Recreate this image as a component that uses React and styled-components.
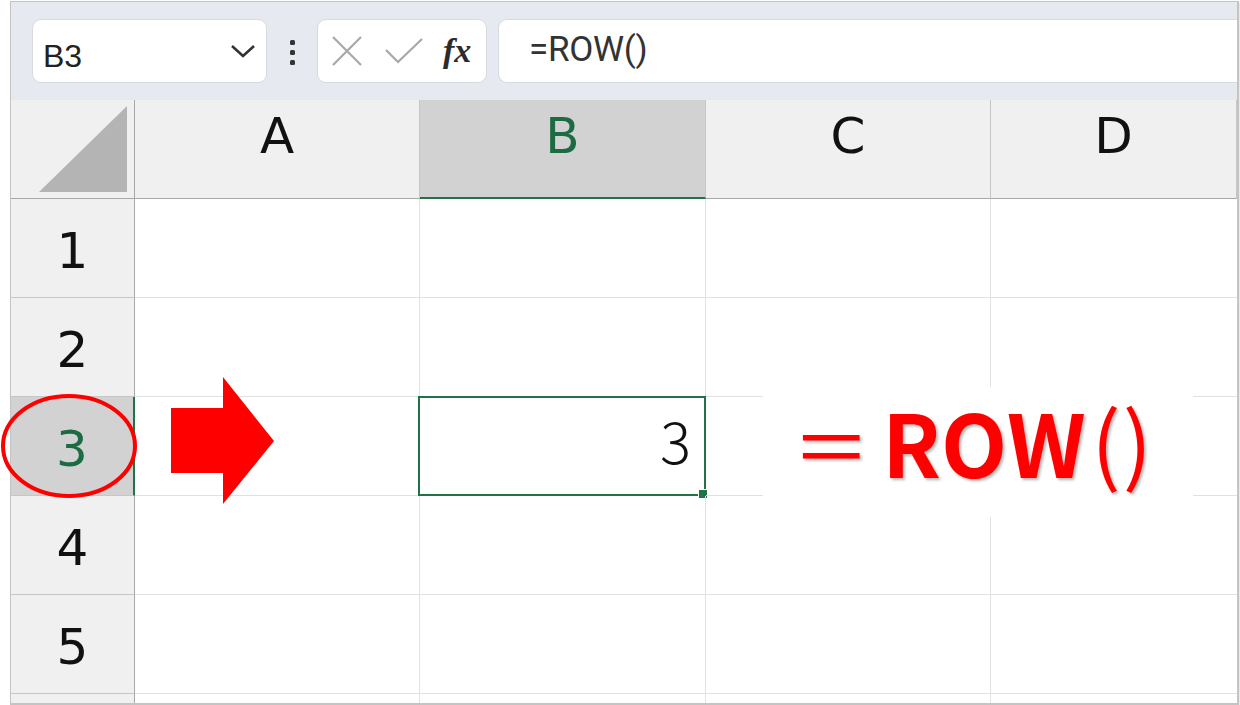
import styled, { createGlobalStyle } from 'styled-components';

const GlobalStyle = createGlobalStyle`
  body {
    margin: 0;
    background: #ffffff;
    font-family: "Noto Sans", sans-serif;
  }
`;

const COLS = ['A', 'B', 'C', 'D'];
const ROWS = [1, 2, 3, 4, 5, 6];
const SEL_COL = 'B';
const SEL_ROW = 3;

const App = () => {
  return (
    <>
      <GlobalStyle />
      <Frame>
        <Toolbar>
          <NameBox>
            <NameText>B3</NameText>
            <svg width="26" height="14" viewBox="0 0 26 14">
              <path d="M2 2 L13 12 L24 2" fill="none" stroke="#333" strokeWidth="2.6" />
            </svg>
          </NameBox>
          <Dots>
            <Dot />
            <Dot />
            <Dot />
          </Dots>
          <FuncBox>
            <svg width="32" height="30" viewBox="0 0 32 30">
              <path d="M2 1 L30 29 M30 1 L2 29" stroke="#a8a8a8" strokeWidth="2.2" />
            </svg>
            <svg width="38" height="26" viewBox="0 0 38 26">
              <path d="M1 12 L13 24 L37 1" fill="none" stroke="#a8a8a8" strokeWidth="2.2" />
            </svg>
            <Fx>fx</Fx>
          </FuncBox>
          <FormulaBox>=ROW()</FormulaBox>
        </Toolbar>

        <Sheet>
          <Corner>
            <svg width="90" height="88" viewBox="0 0 90 88">
              <polygon points="88,0 88,86 0,86" fill="#b4b4b4" />
            </svg>
          </Corner>
          {COLS.map((c) => (
            <ColHead key={c} $selected={c === SEL_COL}>{c}</ColHead>
          ))}

          {ROWS.map((r) => (
            <Row key={r} r={r} />
          ))}
        </Sheet>
      </Frame>
    </>
  );
};

const Row = ({ r }) => {
  const selected = r === SEL_ROW;
  const last = r === ROWS.length;
  return (
    <>
      <RowHead $selected={selected} $last={last}>
        {!last && r}
        {selected && (
          <Circle width="140" height="108" viewBox="0 0 140 108">
            <ellipse cx="70" cy="53" rx="66" ry="50" fill="none" stroke="#ff0000" strokeWidth="4" />
          </Circle>
        )}
      </RowHead>
      {COLS.map((c) => (
        <Cell key={c} $last={last} $lastCol={c === 'D'}>
          {selected && c === 'A' && (
            <Arrow width="104" height="128" viewBox="0 0 104 128">
              <polygon points="0,31 52,31 52,0 103,64 52,127 52,96 0,96" fill="#ff0000" />
            </Arrow>
          )}
          {selected && c === SEL_COL && (
            <>
              <Value>3</Value>
              <Selection />
              <Handle />
            </>
          )}
          {selected && c === 'C' && (
            <Label>
              <LabelPart $kind="eq">＝</LabelPart>
              <LabelPart $kind="bold">ROW</LabelPart>
              <LabelPart $kind="paren">()</LabelPart>
            </Label>
          )}
        </Cell>
      ))}
    </>
  );
};

const Frame = styled.div`
  margin: 1px 0 0 10px;
  width: 1226px;
  border: 1px solid #c4c4c4;
  border-bottom-width: 2px;
  border-right-width: 2px;
  box-shadow: 1px 1px 2px rgba(0, 0, 0, 0.12);
  background: #ffffff;
`;

const Toolbar = styled.div`
  display: flex;
  align-items: center;
  height: 98px;
  padding-left: 21px;
  background: #e6e9ef;
`;

const NameBox = styled.div`
  display: flex;
  align-items: center;
  justify-content: space-between;
  box-sizing: border-box;
  width: 235px;
  height: 64px;
  padding: 0 10px 0 10px;
  background: #ffffff;
  border: 1px solid #d7dae0;
  border-radius: 9px;
`;

const NameText = styled.span`
  padding-top: 11px;
  font-family: "Liberation Sans", Arial, sans-serif;
  font-size: 32px;
  color: #222;
`;

const Dots = styled.div`
  display: flex;
  flex-direction: column;
  align-items: center;
  gap: 5px;
  width: 50px;
  margin-top: 2px;
`;

const Dot = styled.span`
  width: 5px;
  height: 5px;
  border-radius: 1.5px;
  background: #333;
`;

const FuncBox = styled.div`
  display: flex;
  align-items: center;
  gap: 22px;
  box-sizing: border-box;
  width: 170px;
  height: 64px;
  padding: 0 0 0 13px;
  background: #ffffff;
  border: 1px solid #d7dae0;
  border-radius: 9px;
  margin-right: 11px;
`;

const Fx = styled.span`
  font-family: "Liberation Serif", "Times New Roman", serif;
  font-style: italic;
  font-weight: 700;
  font-size: 34px;
  color: #2b2b2b;
  margin-left: -2px;
`;

const FormulaBox = styled.div`
  flex: 1;
  display: flex;
  align-items: center;
  box-sizing: border-box;
  height: 64px;
  padding: 0 0 4px 30px;
  background: #ffffff;
  border: 1px solid #d7dae0;
  border-right: none;
  border-radius: 9px 0 0 9px;
  font-family: "Roboto", "Liberation Sans", sans-serif;
  font-size: 35px;
  color: #333;
  letter-spacing: -0.3px;
`;

const Sheet = styled.div`
  display: grid;
  grid-template-columns: 124px 285px 286px 285px 1fr;
  grid-template-rows: repeat(6, 99px) 9px;
`;

const Corner = styled.div`
  display: flex;
  align-items: flex-end;
  justify-content: flex-end;
  padding: 0 5px 4px 0;
  background: #f0f0f0;
  border-right: 1px solid #a8a8a8;
  border-bottom: 1px solid #a8a8a8;
`;

const headText = `
  display: flex;
  align-items: center;
  justify-content: center;
  font-family: "DejaVu Sans", "Liberation Sans", sans-serif;
  font-size: 50px;
`;

const ColHead = styled.div`
  ${headText}
  padding-bottom: 26px;
  background: ${(p) => (p.$selected ? '#d2d2d2' : '#f0f0f0')};
  color: ${(p) => (p.$selected ? '#1d6b43' : '#111')};
  border-right: 1px solid #c6c6c6;
  border-bottom: ${(p) => (p.$selected ? '2px solid #217346' : '1px solid #a8a8a8')};
  &:last-of-type {
    border-right: none;
  }
`;

const RowHead = styled.div`
  ${headText}
  position: relative;
  padding-top: 6px;
  background: ${(p) => (p.$selected ? '#d2d2d2' : '#f0f0f0')};
  color: ${(p) => (p.$selected ? '#1d6b43' : '#111')};
  border-right: ${(p) => (p.$selected ? '2px solid #217346' : '1px solid #a8a8a8')};
  border-bottom: ${(p) => (p.$last ? 'none' : '1px solid #c6c6c6')};
`;

const Circle = styled.svg`
  position: absolute;
  left: -12px;
  top: -4px;
  z-index: 3;
`;

const Cell = styled.div`
  position: relative;
  display: flex;
  align-items: center;
  justify-content: flex-end;
  border-right: ${(p) => (p.$lastCol ? 'none' : '1px solid #e1e1e1')};
  border-bottom: ${(p) => (p.$last ? 'none' : '1px solid #e1e1e1')};
`;

const Arrow = styled.svg`
  position: absolute;
  left: 36px;
  top: -20px;
  z-index: 2;
`;

const Value = styled.span`
  padding: 0 14px 14px 0;
  font-family: "Noto Sans CJK JP", "Noto Sans", sans-serif;
  font-weight: 300;
  font-size: 58px;
  color: #111;
`;

const Selection = styled.div`
  position: absolute;
  left: -2px;
  top: -1px;
  width: 288px;
  height: 100px;
  box-sizing: border-box;
  border: 2px solid #217346;
  pointer-events: none;
`;

const Handle = styled.div`
  position: absolute;
  left: 279px;
  top: 93px;
  width: 8px;
  height: 8px;
  background: #217346;
  outline: 1px solid #ffffff;
`;

const Label = styled.div`
  position: absolute;
  left: 57px;
  top: -10px;
  width: 430px;
  height: 130px;
  box-sizing: border-box;
  padding: 0 10px 22px 0;
  z-index: 2;
  display: flex;
  align-items: center;
  justify-content: center;
  background: #ffffff;
  color: #ff0000;
  font-family: "Noto Sans CJK JP", "Noto Sans", sans-serif;
  text-shadow: 2px 2px 3px rgba(0, 0, 0, 0.3);
  white-space: nowrap;
`;

const LabelPart = styled.span`
  font-size: ${(p) => (p.$kind === 'bold' ? '86px' : p.$kind === 'eq' ? '78px' : '86px')};
  font-weight: ${(p) => (p.$kind === 'bold' ? 700 : 400)};
  line-height: 1;
  margin: ${(p) => (p.$kind === 'eq' ? '4px 12px 0 0' : p.$kind === 'paren' ? '-4px 0 0 6px' : '0')};
  letter-spacing: ${(p) => (p.$kind === 'paren' ? '2px' : '0')};
`;

export default App;
